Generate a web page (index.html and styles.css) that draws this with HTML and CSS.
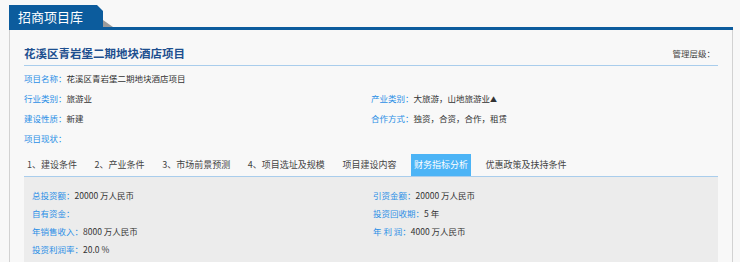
FILE: index.html
```html
<!DOCTYPE html>
<html lang="zh-CN">
<head>
  <meta charset="UTF-8">
  <title>招商项目库</title>
  <link rel="stylesheet" href="styles.css">
</head>
<body>
  <div class="head">
    <div class="head-tab">招商项目库</div>
    <div class="head-line"></div>
  </div>

  <div class="panel">
    <div class="title-row">
      <h1 class="title">花溪区青岩堡二期地块酒店项目</h1>
      <span class="level">管理层级：</span>
    </div>

    <div class="info">
      <div class="item wide"><span class="lbl">项目名称：</span>花溪区青岩堡二期地块酒店项目</div>
      <div class="item"><span class="lbl">行业类别：</span>旅游业</div>
      <div class="item"><span class="lbl">产业类别：</span>大旅游，山地旅游业<span class="mark">▲</span></div>
      <div class="item"><span class="lbl">建设性质：</span>新建</div>
      <div class="item"><span class="lbl">合作方式：</span>独资，合资，合作，租赁</div>
      <div class="item wide"><span class="lbl">项目现状：</span></div>
    </div>

    <ul class="tabs">
      <li>1、建设条件</li>
      <li>2、产业条件</li>
      <li>3、市场前景预测</li>
      <li>4、项目选址及规模</li>
      <li>项目建设内容</li>
      <li class="active">财务指标分析</li>
      <li>优惠政策及扶持条件</li>
    </ul>

    <div class="tab-body">
      <div class="item"><span class="lbl">总投资额：</span>20000 万人民币</div>
      <div class="item"><span class="lbl">引资金额：</span>20000 万人民币</div>
      <div class="item"><span class="lbl">自有资金：</span></div>
      <div class="item"><span class="lbl">投资回收期：</span>5 年</div>
      <div class="item"><span class="lbl">年销售收入：</span>8000 万人民币</div>
      <div class="item"><span class="lbl">年 利 润：</span>4000 万人民币</div>
      <div class="item wide"><span class="lbl">投资利润率：</span>20.0 %</div>
    </div>
  </div>
</body>
</html>
```

FILE: styles.css
```css
* {
  box-sizing: border-box;
}

body {
  margin: 0;
  background: #f8f8f8;
  font-family: "Noto Sans CJK SC", "Noto Sans", sans-serif;
  color: #333;
}

.head {
  display: flex;
  align-items: flex-end;
  padding: 5px 7px 0 9px;
}

.head-tab {
  width: 94px;
  height: 25px;
  padding-left: 9px;
  line-height: 23px;
  font-size: 13px;
  color: #fff;
  background: #0c5c9d;
  clip-path: polygon(0 0, 88px 0, 94px 6px, 94px 100%, 0 100%);
}

.head-line {
  position: relative;
  flex: 1;
  height: 3px;
  background: #0c5c9d;
}

/* little grey fold under the tab corner */
.head-line::before {
  content: "";
  position: absolute;
  left: 0;
  top: -7px;
  border-top: 7px solid transparent;
  border-left: 10px solid #9a9a9a;
}

.panel {
  margin: 0 7px 0 9px;
  padding: 0 14px 30px;
  border-left: 1px solid #d2d2d2;
  border-right: 1px solid #d2d2d2;
  background: #f8f8f8;
}

.title-row {
  display: flex;
  justify-content: space-between;
  align-items: center;
  height: 36px;
  padding-top: 10px;
  border-bottom: 1px solid #a9cdec;
}

.title {
  margin: 0;
  font-size: 11.5px;
  font-weight: bold;
  color: #1d4f8f;
}

.level {
  margin-right: 3px;
  font-size: 8.5px;
  color: #444;
}

.info {
  display: grid;
  grid-template-columns: 347px 1fr;
  padding-top: 3px;
  font-size: 8.5px;
  line-height: 19.5px;
}

.item {
  white-space: nowrap;
}

.wide {
  grid-column: 1 / -1;
}

.lbl {
  color: #2b8fe6;
}

.mark {
  font-size: 7px;
}

.tabs {
  display: flex;
  margin: 6px 0 0;
  padding: 0;
  list-style: none;
  border-bottom: 1px solid #a9cdec;
}

.tabs li {
  height: 22px;
  margin-right: 11.6px;
  padding: 0 3px;
  line-height: 22px;
  font-size: 9px;
  color: #444;
}

.tabs li.active {
  background: #4cb4f6;
  color: #fff;
}

.tab-body {
  display: grid;
  grid-template-columns: 341px 1fr;
  padding: 9px 8px 20px;
  background: #ececec;
  font-size: 8.5px;
  line-height: 18px;
}
```
